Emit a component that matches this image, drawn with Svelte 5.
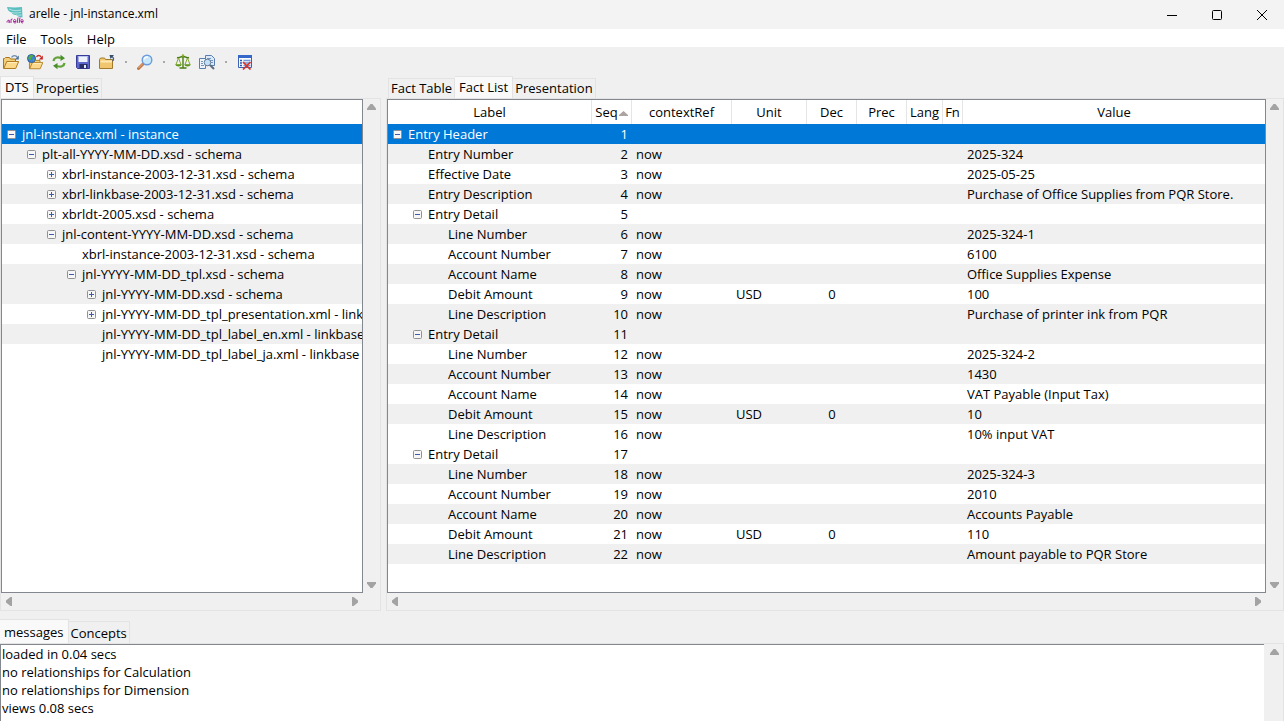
<!--
  Main window: menu, toolbar, DTS tree, fact list and message log.
-->

<script>
  const menus = ['File', 'Tools', 'Help'];
  const tools = [
    'Open file', 'Open web', 'Reload', 'Save', 'Close folder', '|',
    'Find', '|', 'Validate', 'Compare', '|', 'Clear log'
  ];

  const leftTabs = ['DTS', 'Properties'];
  const rightTabs = ['Fact Table', 'Fact List', 'Presentation'];
  const bottomTabs = ['messages', 'Concepts'];

  // toggle: '-' expanded, '+' collapsed, '' leaf
  const tree = [
    { level: 0, toggle: '-', text: 'jnl-instance.xml - instance', selected: true },
    { level: 1, toggle: '-', text: 'plt-all-YYYY-MM-DD.xsd - schema', odd: true },
    { level: 2, toggle: '+', text: 'xbrl-instance-2003-12-31.xsd - schema' },
    { level: 2, toggle: '+', text: 'xbrl-linkbase-2003-12-31.xsd - schema', odd: true },
    { level: 2, toggle: '+', text: 'xbrldt-2005.xsd - schema' },
    { level: 2, toggle: '-', text: 'jnl-content-YYYY-MM-DD.xsd - schema', odd: true },
    { level: 3, toggle: '', text: 'xbrl-instance-2003-12-31.xsd - schema' },
    { level: 3, toggle: '-', text: 'jnl-YYYY-MM-DD_tpl.xsd - schema', odd: true },
    { level: 4, toggle: '+', text: 'jnl-YYYY-MM-DD.xsd - schema', odd: true },
    { level: 4, toggle: '+', text: 'jnl-YYYY-MM-DD_tpl_presentation.xml - linkbase' },
    { level: 4, toggle: '', text: 'jnl-YYYY-MM-DD_tpl_label_en.xml - linkbase', odd: true },
    { level: 4, toggle: '', text: 'jnl-YYYY-MM-DD_tpl_label_ja.xml - linkbase' }
  ];

  const columns = [
    { key: 'label', title: 'Label' },
    { key: 'seq', title: 'Seq' },
    { key: 'context', title: 'contextRef' },
    { key: 'unit', title: 'Unit' },
    { key: 'dec', title: 'Dec' },
    { key: 'prec', title: 'Prec' },
    { key: 'lang', title: 'Lang' },
    { key: 'fn', title: 'Fn' },
    { key: 'value', title: 'Value' }
  ];

  const entry = (label, value) => ({ level: 1, label, value, context: 'now' });
  const line = (label, value, unit = '', dec = '') => ({ level: 2, label, value, unit, dec, context: 'now' });

  function detail(number, account, name, amount, description) {
    return [
      { level: 1, label: 'Entry Detail', group: true },
      line('Line Number', number),
      line('Account Number', account),
      line('Account Name', name),
      line('Debit Amount', amount, 'USD', '0'),
      line('Line Description', description)
    ];
  }

  // Sequence numbers of the shaded rows
  const shaded = [2, 4, 6, 8, 10, 11, 13, 15, 18, 20, 22];

  const facts = [
    { level: 0, label: 'Entry Header', group: true, selected: true },
    entry('Entry Number', '2025-324'),
    entry('Effective Date', '2025-05-25'),
    entry('Entry Description', 'Purchase of Office Supplies from PQR Store.'),
    ...detail('2025-324-1', '6100', 'Office Supplies Expense', '100', 'Purchase of printer ink from PQR'),
    ...detail('2025-324-2', '1430', 'VAT Payable (Input Tax)', '10', '10% input VAT'),
    ...detail('2025-324-3', '2010', 'Accounts Payable', '110', 'Amount payable to PQR Store')
  ].map((fact, i) => ({ ...fact, seq: i + 1, odd: shaded.includes(i + 1) }));

  const messages = [
    'loaded in 0.04 secs',
    'no relationships for Calculation',
    'no relationships for Dimension',
    'views 0.08 secs'
  ].join('\n');
</script>

{#snippet folder()}
  <path d="M.5 14.500V4.500h1l1-1h4l1 1.500h5v2" fill="#f3cf7a" stroke="#a8761c" />
  <path d="M.8 14.500 3.700 7.500h12l-3 7z" fill="#fbd88a" stroke="#b07c20" />
  <path d="M4.500 8.600h9.500" stroke="#fff1c4" />
{/snippet}

{#snippet icon(name)}
  <svg class="icon" width="16" height="16" viewBox="0 0 16 16" fill="none" aria-hidden="true">
    {#if name === 'Open file'}
      {@render folder()}
      <path d="M8.500 3.500C10 1 13 1 14.500 3.500" stroke="#6c8cae" stroke-width="1.300" />
      <path d="M15.800 1.500v4h-4z" fill="#4f7397" />
    {:else if name === 'Open web'}
      <g transform="translate(2 2) scale(.88)">{@render folder()}</g>
      <circle cx="4.500" cy="4.500" r="4" fill="#3d83cf" stroke="#2d5d9c" />
      <path d="M2 2c2-1.500 4-1 4 0S4 3.500 4 5 2 6 1.300 4.500zM6 5l2 .5L6 8z" fill="#52ad3f" />
      <path d="M9.500 3c1-2 3.500-2 4.500 0" stroke="#d23127" stroke-width="1.500" />
      <path d="M15.800 1.500v4h-4z" fill="#c91f1f" />
    {:else if name === 'Reload'}
      <path d="M2.500 7C3 3.500 6 2.800 10 4" stroke="#64a33c" stroke-width="2.300" />
      <path d="M9.500.8v6.200L14 4.300z" fill="#4a8f29" />
      <path d="M13.500 9c-.5 3.500-3.500 4.200-7.500 3" stroke="#64a33c" stroke-width="2.300" />
      <path d="M6.500 15.200V9L2 11.700z" fill="#4a8f29" />
    {:else if name === 'Save'}
      <path d="M1.500 1.500h13v13h-12l-1-1z" fill="#5e67cc" stroke="#373c99" />
      <path d="M3.500 2h9v6h-9z" fill="#eef2fd" />
      <path d="M3.500 2.500h9" stroke="#b9c6ef" />
      <path d="M4.500 10h8v4.500h-8z" fill="#292e66" />
      <path d="M9 11h2v3H9z" fill="#e3e8fa" />
    {:else if name === 'Close folder'}
      <path d="M.5 14.500V5.500l1-1.500h4l1 1.500h7v9z" fill="#f0c76f" stroke="#a37a2c" />
      <path d="M1.500 7.500h11.500" stroke="#fde9b4" stroke-width="2" />
      <path d="M13.500 7c1.500-1.500 1.500-3-.5-4.500" stroke="#47627f" stroke-width="1.300" />
      <path d="M10.500 1h4.500l-3.500 4z" fill="#354f70" />
    {:else if name === 'Find'}
      <path d="m1.500 14.500 5-5" stroke="#bf7747" stroke-width="3" stroke-linecap="round" />
      <path d="m1.500 14 4.500-4.500" stroke="#ecb185" />
      <circle cx="10" cy="6" r="4.800" fill="#c7e8fb" stroke="#6c9cde" stroke-width="1.400" />
      <path d="M7.300 5.500C7.500 3.500 9 2.800 10.800 3" stroke="#fff" stroke-width="1.500" />
    {:else if name === 'Validate'}
      <path d="M8 1.500v12M4.500 14h7M2 3.500c3 1 3-1 6-1s3 2 6 1" stroke="#4b7e12" stroke-width="1.400" />
      <path d="M3.500 4 1 10.500M3.500 4 6 10.500M12.500 4 10 10.500M12.500 4 15 10.500" stroke="#83a72c" />
      <path d="M.3 10.200h6.400c-.5 3-5.900 3-6.400 0zM9.300 10.200h6.400c-.5 3-5.900 3-6.400 0z" fill="#5d9515" />
      <circle cx="8" cy="1.500" r="1.200" fill="#8bb32b" />
    {:else if name === 'Compare'}
      <path d="M6.500 1.500h6l3 3v7h-9z" fill="#dce9f8" stroke="#587daf" />
      <path d="M8 4.500h4M8 6.500h6M12 8.500h2" stroke="#7294c1" />
      <path d="M.5 4.500h6v10h-6z" fill="#edf3fb" stroke="#587daf" />
      <path d="M2 7.500h2M2 9.500h2M2 11.500h3" stroke="#7294c1" />
      <path d="m11 11 4 4" stroke="#5b6b7e" stroke-width="2" />
      <circle cx="8.500" cy="8.500" r="3.300" fill="#bfdff7" stroke="#6a7d94" />
    {:else}
      <path d="M1.500 1.500h13v12h-13z" fill="#f7faff" stroke="#3b62b8" />
      <path d="M1 2.500h14" stroke="#3566c9" stroke-width="3" />
      <path d="M3 6.500h2M3 9h2M3 11.500h2" stroke="#2d55a8" stroke-width="1.500" />
      <path d="M6.500 6.500h7M6.500 9h7M6.500 11.500h7" stroke="#7196dc" stroke-width="1.500" />
      <path d="m6 8 7.500 7.500M13.500 8 6 15.500" stroke="#dc3326" stroke-width="1.700" />
    {/if}
  </svg>
{/snippet}

{#snippet tabs(items, active, label)}
  <div class="tabs" role="tablist" aria-label={label}>
    {#each items as item}
      <button type="button" role="tab" class="tab" class:active={item === active} aria-selected={item === active}>{item}</button>
    {/each}
  </div>
{/snippet}

{#snippet arrow(direction)}
  <button type="button" class="arrow" aria-label={`Scroll ${direction}`}>
    <svg class={direction} width="9" height="9" viewBox="0 0 9 9" aria-hidden="true">
      <path d="M3.500 1h2L9 5.500V7H0V5.500z" fill="#a3a3a3" />
    </svg>
  </button>
{/snippet}

{#snippet toggler(kind)}
  {#if kind}
    <button type="button" class="toggle" aria-label={kind === '+' ? 'Expand' : 'Collapse'}>
      <svg width="9" height="9" viewBox="0 0 9 9" aria-hidden="true">
        <rect x=".5" y=".5" width="8" height="8" rx="1" fill="#f6f6f6" stroke="#919191" />
        <path d={kind === '+' ? 'M2 4.500h5M4.500 2v5' : 'M2 4.500h5'} stroke="#3f5aa6" />
      </svg>
    </button>
  {:else}
    <span class="toggle"></span>
  {/if}
{/snippet}

<div class="window">
  <header class="titlebar">
    <svg width="18" height="18" viewBox="0 0 18 18" aria-hidden="true">
      <path d="M1 1c5 .5 10 .5 15 0l.5 10.500c-3 0-5-1-6-2.500-3 .2-4.500-1-5-2.500C3 6 1.500 4 1 1z" fill="#5bbfc0" />
      <path d="M3 3c4 2 8 2 12 1M5.500 6.500c3 .8 6 .5 9.500 0M10 9c2 .3 3.500.3 5.500 0" stroke="#b5e3e1" fill="none" />
      <path d="M1 16.500c0-3 3-3 2.500 0M3 14v3M5 17v-3.500l1.500-.5M7.500 15.500H10c0-3-3-2.500-2.500 0 .3 2 2 1.500 2.500 1M12 11.500l-.8 5.500M14 11.500l-.8 5.500M15 15.500h2.200c0-3-2.700-2.500-2.200 0 .3 2 1.700 1.500 2.200 1" fill="none" stroke="#a32694" />
    </svg>
    <h1>arelle - jnl-instance.xml</h1>
    <div class="controls">
      <button type="button" aria-label="Minimize">
        <svg width="12" height="12" viewBox="0 0 12 12"><path d="M1 6.500h10" /></svg>
      </button>
      <button type="button" aria-label="Maximize">
        <svg width="12" height="12" viewBox="0 0 12 12"><rect x="1.500" y="1.500" width="9" height="9" rx="1" /></svg>
      </button>
      <button type="button" aria-label="Close">
        <svg width="12" height="12" viewBox="0 0 12 12"><path d="m1 1 10 10M11 1 1 11" /></svg>
      </button>
    </div>
  </header>

  <nav class="menubar" aria-label="Main menu">
    {#each menus as menu}
      <button type="button">{menu}</button>
    {/each}
  </nav>

  <div class="toolbar" role="toolbar" aria-label="Tools">
    {#each tools as tool}
      {#if tool === '|'}
        <span class="separator"></span>
      {:else}
        <button type="button" aria-label={tool}>{@render icon(tool)}</button>
      {/if}
    {/each}
  </div>

  <main class="panes">
    <section class="notebook">
      {@render tabs(leftTabs, 'DTS', 'Document views')}
      <div class="frame">
        <div class="view">
          <div class="tree-head"></div>
          <ul class="tree">
            {#each tree as node}
              <li class="level-{node.level}" class:odd={node.odd} class:selected={node.selected}>
                {@render toggler(node.toggle)}<span>{node.text}</span>
              </li>
            {/each}
          </ul>
        </div>
        <div class="scroll vertical">{@render arrow('up')}{@render arrow('down')}</div>
        <div class="scroll horizontal">{@render arrow('left')}{@render arrow('right')}</div>
      </div>
    </section>

    <section class="notebook facts">
      {@render tabs(rightTabs, 'Fact List', 'Fact views')}
      <div class="frame">
        <div class="view">
          <table>
            <colgroup>
              {#each columns as column}
                <col class="col-{column.key}" />
              {/each}
            </colgroup>
            <thead>
              <tr>
                {#each columns as column}
                  <th scope="col" class={column.key}>
                    {column.title}{#if column.key === 'seq'}<svg width="9" height="5" viewBox="0 0 9 5" aria-hidden="true"><path d="M4.500 0 9 4v1H0V4z" fill="#ada3a0" /></svg>{/if}
                  </th>
                {/each}
              </tr>
            </thead>
            <tbody>
              {#each facts as fact}
                <tr class:odd={fact.odd} class:selected={fact.selected}>
                  {#each columns as column}
                    {#if column.key === 'label'}
                      <td class="label">
                        <div class="cell level-{fact.level}">
                          {@render toggler(fact.group ? '-' : '')}<span>{fact.label}</span>
                        </div>
                      </td>
                    {:else}
                      <td class={column.key}>{fact[column.key] ?? ''}</td>
                    {/if}
                  {/each}
                </tr>
              {/each}
            </tbody>
          </table>
        </div>
        <div class="scroll vertical">{@render arrow('up')}{@render arrow('down')}</div>
        <div class="scroll horizontal">{@render arrow('left')}{@render arrow('right')}</div>
      </div>
    </section>
  </main>

  <section class="output">
    {@render tabs(bottomTabs, 'messages', 'Output views')}
    <div class="log">
      <textarea readonly rows="4" aria-label="Messages" value={messages}></textarea>
      <div class="scroll vertical">{@render arrow('up')}</div>
    </div>
  </section>
</div>

<style>
  :global(body) {
    margin: 0;
    background: #f0f0f0;
  }

  .window {
    display: flex;
    flex-direction: column;
    height: 100vh;
    overflow: hidden;
    background: #f0f0f0;
    color: #000;
    font: 13px/20px 'Open Sans', 'Noto Sans', sans-serif;
  }

  button {
    margin: 0;
    padding: 0;
    border: 0;
    background: none;
    color: inherit;
    font: inherit;
  }

  svg {
    display: block;
    flex: none;
  }

  /* === Title bar and menu === */

  .titlebar {
    display: flex;
    align-items: center;
    height: 29px;
    flex: none;
    padding-left: 6px;
    background: #f3f3f3;
  }

  h1 {
    flex: 1;
    margin: 0 0 2px 5px;
    font-size: 12px;
    font-weight: 400;
  }

  .controls {
    display: flex;
    height: 26px;
  }

  .controls button {
    display: grid;
    place-items: center;
    width: 45px;
  }

  .controls svg {
    fill: none;
    stroke: #000;
  }

  .menubar {
    display: flex;
    flex: none;
    gap: 14px;
    height: 18px;
    padding-left: 6px;
    background: #fff;
  }

  .menubar button {
    line-height: 20px;
  }

  .toolbar {
    display: flex;
    align-items: center;
    flex: none;
    height: 29px;
  }

  .toolbar button {
    padding: 0 5px 0 3px;
  }

  .separator {
    width: 2px;
    height: 2px;
    margin: 0 7px 0 5px;
    background: #a9a9a9;
  }

  /* === Notebooks === */

  .panes {
    display: grid;
    grid-template-columns: 381px 1fr;
    gap: 5px;
    flex: 1;
    min-height: 0;
  }

  .notebook {
    display: flex;
    flex-direction: column;
    min-width: 0;
    min-height: 0;
  }

  .tabs {
    display: flex;
    align-items: flex-end;
    flex: none;
    height: 22px;
  }

  .facts .tabs {
    padding-left: 2px;
  }

  .tab {
    height: 20px;
    padding: 0 2px;
    border: 1px solid #e3e3e3;
    border-bottom: 0;
    line-height: 19px;
  }

  .tab + .tab {
    border-left: 0;
  }

  .tab.active {
    height: 22px;
    padding: 0 4px;
    background: #f9f9f9;
  }

  .frame {
    display: grid;
    grid-template: 1fr 17px / 1fr 17px;
    flex: 1;
    min-height: 0;
    border: 1px solid #e3e3e3;
  }

  .view {
    min-width: 0;
    min-height: 0;
    overflow: hidden;
    border: 1px solid #828790;
    background: #fff;
  }

  .odd {
    background: #f0f0f0;
  }

  .selected {
    background: #0078d7;
    color: #fff;
  }

  /* === Scrollbars === */

  .scroll {
    display: flex;
    justify-content: space-between;
  }

  .vertical {
    flex-direction: column;
    align-items: center;
  }

  .horizontal {
    align-items: center;
    width: 100%;
  }

  .arrow {
    display: grid;
    place-items: center;
    width: 17px;
    height: 17px;
  }

  .down {
    transform: rotate(180deg);
  }

  .left {
    transform: rotate(-90deg);
  }

  .right {
    transform: rotate(90deg);
  }

  /* === Trees === */

  .tree-head {
    height: 24px;
  }

  .tree {
    margin: 0;
    padding: 0;
    list-style: none;
  }

  .tree li,
  .cell {
    display: flex;
    align-items: center;
    gap: 6px;
    height: 20px;
    padding-left: 5px;
    white-space: nowrap;
  }

  .toggle {
    flex: none;
    width: 9px;
  }

  .tree .level-1,
  .cell.level-1 {
    padding-left: 25px;
  }

  .tree .level-2,
  .cell.level-2 {
    padding-left: 45px;
  }

  .tree .level-3 {
    padding-left: 65px;
  }

  .tree .level-4 {
    padding-left: 85px;
  }

  /* === Fact list === */

  table {
    width: 100%;
    table-layout: fixed;
    border-collapse: separate;
    border-spacing: 0;
  }

  .col-label {
    width: 204px;
  }

  .col-seq {
    width: 40px;
  }

  .col-context {
    width: 100px;
  }

  .col-unit {
    width: 75px;
  }

  .col-dec,
  .col-prec {
    width: 50px;
  }

  .col-lang {
    width: 36px;
  }

  .col-fn {
    width: 20px;
  }

  th {
    height: 24px;
    padding: 0 2px;
    overflow: hidden;
    border-right: 1px solid #e5e5e5;
    box-sizing: border-box;
    font-weight: 400;
    text-align: center;
    white-space: nowrap;
  }

  th:last-child {
    border-right: 0;
  }

  th svg {
    display: inline-block;
    margin-left: 1px;
    vertical-align: middle;
  }

  td {
    height: 20px;
    padding: 0 4px;
    overflow: hidden;
    white-space: nowrap;
  }

  td.label {
    padding: 0;
  }

  td.seq {
    text-align: right;
  }

  td.dec {
    text-align: center;
  }

  /* === Message log === */

  .output {
    flex: none;
    margin-top: 8px;
  }

  .output .tabs {
    height: 24px;
  }

  .output .tab {
    height: 22px;
    line-height: 20px;
  }

  .output .tab.active {
    height: 24px;
    border-left: 0;
  }

  .log {
    display: grid;
    grid-template-columns: 1fr 17px;
    gap: 2px;
    border: 1px solid #e3e3e3;
    border-width: 1px 1px 0 0;
  }

  textarea {
    display: block;
    margin: 0;
    padding: 0 0 4px 1px;
    overflow: hidden;
    border: 1px solid #828790;
    border-width: 1px 0 0 1px;
    border-radius: 0;
    outline: 0;
    background: #fff;
    color: inherit;
    font: inherit;
    line-height: 18px;
    resize: none;
  }
</style>
